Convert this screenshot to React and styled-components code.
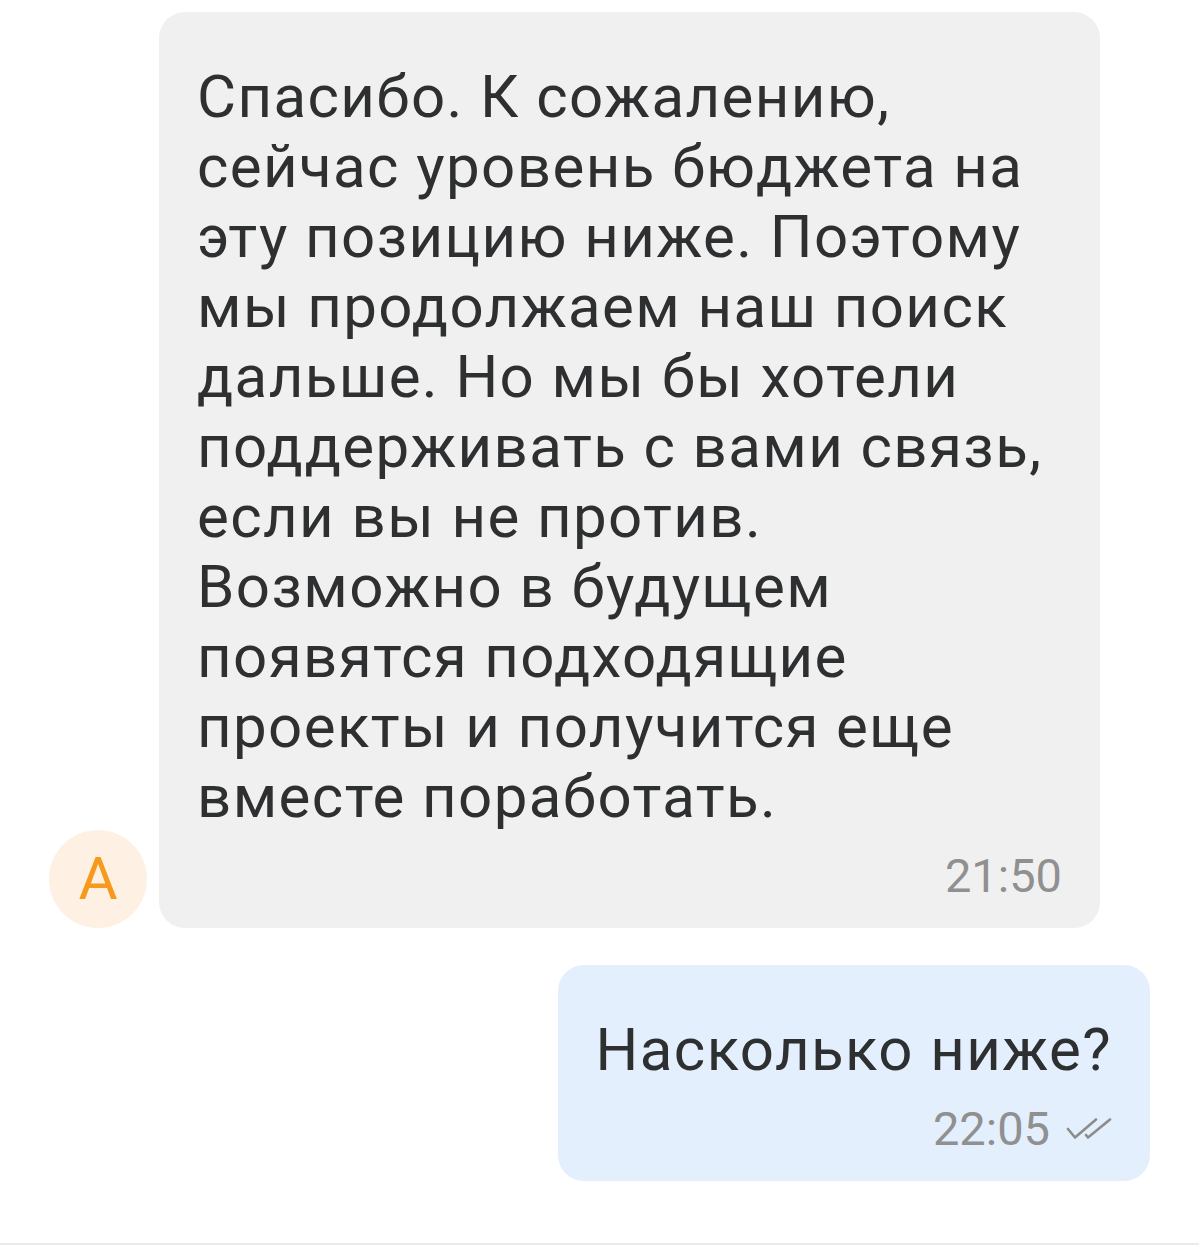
import styled, { createGlobalStyle } from "styled-components";

const GlobalStyle = createGlobalStyle`
  html, body {
    margin: 0;
    padding: 0;
    background: #fff;
  }
  body {
    font-family: Roboto, "Noto Sans", "Liberation Sans", sans-serif;
  }
`;

const Page = styled.div`
  display: flex;
  flex-direction: column;
  height: 1245px;
  width: 1199px;
  box-sizing: border-box;
`;

const Chat = styled.div`
  flex: 1;
  display: flex;
  flex-direction: column;
  gap: 37px;
  padding: 12px 49px 0 49px;
`;

const Row = styled.div`
  display: flex;
  align-items: flex-end;
  justify-content: ${(p) => (p.$out ? "flex-end" : "flex-start")};
  gap: 12px;
`;

const Avatar = styled.div`
  width: 98px;
  height: 98px;
  flex: none;
  border-radius: 50%;
  background: #fef1e3;
  color: #f7991c;
  display: flex;
  align-items: center;
  justify-content: center;
  font-size: 60px;
  line-height: 1;
`;

const Bubble = styled.div`
  box-sizing: border-box;
  width: ${(p) => (p.$out ? "auto" : "941px")};
  background: ${(p) => (p.$out ? "#e3effc" : "#f0f0f0")};
  border-radius: 26px;
  padding: 50px 38px 25px 38px;
  display: flex;
  flex-direction: column;
`;

const Text = styled.div`
  font-size: 60px;
  line-height: 70px;
  color: #2e2f30;
  letter-spacing: 1.4px;
  white-space: nowrap;
`;

const Meta = styled.div`
  display: flex;
  align-items: center;
  justify-content: flex-end;
  gap: 16px;
  margin-top: 16px;
  font-size: 47px;
  line-height: 55px;
  color: #909090;
`;

const Divider = styled.div`
  height: 2px;
  background: #ebebeb;
`;

const DoubleCheck = () => (
  <svg width="46" height="22" viewBox="0 0 46 22" fill="none">
    <path
      d="M2 11 L9 19.5 L30 1.5"
      stroke="#8c8c8c"
      strokeWidth="2.6"
      strokeLinecap="round"
      strokeLinejoin="round"
    />
    <path
      d="M20 17 L22 19.5 L44 1.5"
      stroke="#8c8c8c"
      strokeWidth="2.6"
      strokeLinecap="round"
      strokeLinejoin="round"
    />
  </svg>
);

const incoming = [
  "Спасибо. К сожалению,",
  "сейчас уровень бюджета на",
  "эту позицию ниже. Поэтому",
  "мы продолжаем наш поиск",
  "дальше. Но мы бы хотели",
  "поддерживать с вами связь,",
  "если вы не против.",
  "Возможно в будущем",
  "появятся подходящие",
  "проекты и получится еще",
  "вместе поработать.",
];

export default function App() {
  return (
    <>
      <GlobalStyle />
      <Page>
        <Chat>
          <Row>
            <Avatar>А</Avatar>
            <Bubble>
              <Text>
                {incoming.map((line, i) => (
                  <div key={i}>{line}</div>
                ))}
              </Text>
              <Meta>21:50</Meta>
            </Bubble>
          </Row>
          <Row $out>
            <Bubble $out>
              <Text>Насколько ниже?</Text>
              <Meta>
                22:05
                <DoubleCheck />
              </Meta>
            </Bubble>
          </Row>
        </Chat>
        <Divider />
      </Page>
    </>
  );
}
